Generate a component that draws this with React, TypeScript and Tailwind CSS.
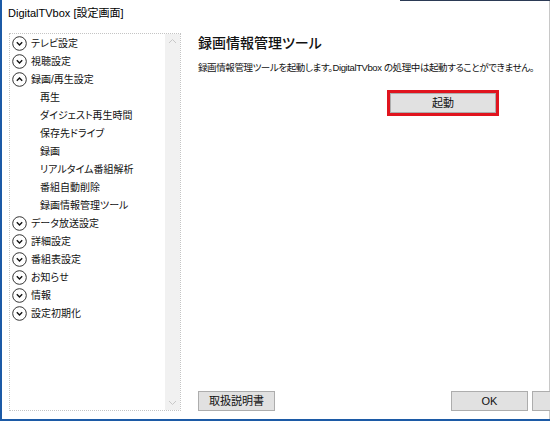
import React from "react";

const font = {
  fontFamily: '"Liberation Sans", "Noto Sans CJK JP", sans-serif',
};

type Item = { label: string; level: 0 | 1; open?: boolean };

const items: Item[] = [
  { label: "テレビ設定", level: 0 },
  { label: "視聴設定", level: 0 },
  { label: "録画/再生設定", level: 0, open: true },
  { label: "再生", level: 1 },
  { label: "ダイジェスト再生時間", level: 1 },
  { label: "保存先ドライブ", level: 1 },
  { label: "録画", level: 1 },
  { label: "リアルタイム番組解析", level: 1 },
  { label: "番組自動削除", level: 1 },
  { label: "録画情報管理ツール", level: 1 },
  { label: "データ放送設定", level: 0 },
  { label: "詳細設定", level: 0 },
  { label: "番組表設定", level: 0 },
  { label: "お知らせ", level: 0 },
  { label: "情報", level: 0 },
  { label: "設定初期化", level: 0 },
];

function CircleChevron({ up }: { up?: boolean }) {
  return (
    <svg width="15" height="15" viewBox="0 0 15 15" className="shrink-0">
      <circle cx="7.5" cy="7.5" r="6.8" fill="none" stroke="#333" strokeWidth="1" />
      {up ? (
        <path d="M4.8 8.8 L7.5 6.1 L10.2 8.8" fill="none" stroke="#111" strokeWidth="1.4" />
      ) : (
        <path d="M4.8 6.3 L7.5 9 L10.2 6.3" fill="none" stroke="#111" strokeWidth="1.4" />
      )}
    </svg>
  );
}

function Btn({ children, className = "" }: { children: React.ReactNode; className?: string }) {
  return (
    <div
      className={`h-[20px] w-[77px] shrink-0 flex items-center justify-center border border-[#adadad] bg-[#e1e1e1] text-[11px] text-[#111] ${className}`}
    >
      {children}
    </div>
  );
}

export default function App() {
  return (
    <div
      className="w-[550px] h-[421px] overflow-hidden bg-white flex flex-col border-l-2 border-b-2 border-[#1c5aa6] [font-feature-settings:'palt']"
      style={font}
    >
      <div className="flex h-px shrink-0">
        <div className="w-[398px]" />
        <div className="flex-1 bg-[#2b3a55]" />
      </div>
      <div className="flex flex-1 border-r border-[#c8c8c8]">
        <div className="flex flex-col flex-1">
          <div className="h-[32px] pl-[6px] pt-[4px] text-[11px] leading-[16px] text-black">
            DigitalTVbox [設定画面]
          </div>
          <div className="flex pl-[7px]">
            {/* tree */}
            <div className="w-[172px] h-[378px] border border-dotted border-[#c4c4c4] flex">
              <div className="flex-1 flex flex-col">
                {items.map((it) => (
                  <div
                    key={it.label}
                    className={`h-[18px] flex items-center text-[10px] text-[#111] ${
                      it.level === 0 ? "pl-[2px] gap-[4px]" : "pl-[30px]"
                    }`}
                  >
                    {it.level === 0 && <CircleChevron up={it.open} />}
                    <span>{it.label}</span>
                  </div>
                ))}
              </div>
              <div className="w-[15px] bg-[#f1f1f1] flex flex-col justify-between items-center py-[4px]">
                <svg width="9" height="6" viewBox="0 0 9 6">
                  <path d="M1 5 L4.5 1.5 L8 5" fill="none" stroke="#c8c8c8" strokeWidth="1" />
                </svg>
                <svg width="9" height="6" viewBox="0 0 9 6">
                  <path d="M1 1 L4.5 4.5 L8 1" fill="none" stroke="#c8c8c8" strokeWidth="1" />
                </svg>
              </div>
            </div>

            {/* content */}
            <div className="ml-[17px] flex-1 flex flex-col h-[378px]">
              <div className="text-[14px] leading-[20px] font-medium text-[#111]">
                録画情報管理ツール
              </div>
              <div className="mt-[8px] text-[9.5px] leading-[14px] tracking-[-0.4px] text-[#111] whitespace-nowrap">
                録画情報管理ツールを起動します。DigitalTVbox の処理中は起動することができません。
              </div>
              <div className="mt-[15px] ml-[189px] w-[112px] h-[26px] border-[3px] border-[#e0141e] flex">
                <div className="flex-1 border border-[#adadad] bg-[#e1e1e1] flex items-center justify-center text-[11px] text-[#111]">
                  起動
                </div>
              </div>
              <div className="mt-auto flex">
                <Btn>取扱説明書</Btn>
                <Btn className="ml-[176px]">OK</Btn>
                <Btn className="ml-[4px]"> </Btn>
              </div>
            </div>
          </div>
        </div>
      </div>
    </div>
  );
}
